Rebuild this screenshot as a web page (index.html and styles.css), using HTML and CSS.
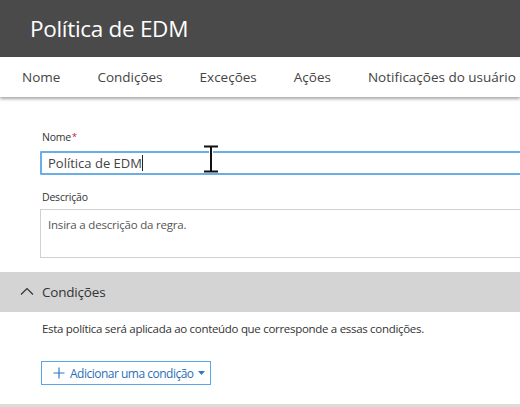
FILE: index.html
```html
<!DOCTYPE html>
<html lang="pt">
<head>
<meta charset="utf-8">
<link rel="stylesheet" href="styles.css">
</head>
<body>
<div class="page">
  <header class="header"><h1 class="title">Política de EDM</h1></header>
  <nav class="nav">
    <span class="nav-item">Nome</span>
    <span class="nav-item">Condições</span>
    <span class="nav-item">Exceções</span>
    <span class="nav-item">Ações</span>
    <span class="nav-item">Notificações do usuário</span>
  </nav>
  <section class="form">
    <label class="label">Nome<span class="req">*</span></label>
    <div class="input"><span class="value">Política de EDM</span><span class="caret"></span></div>
    <label class="label label-desc">Descrição</label>
    <div class="textarea">Insira a descrição da regra.</div>
  </section>
  <div class="band">
    <svg class="chev" width="14" height="8" viewBox="0 0 14 8"><path d="M1 7.5 L7 1.5 L13 7.5" fill="none" stroke="#333" stroke-width="1.2"/></svg>
    <span class="band-title">Condições</span>
  </div>
  <section class="cond">
    <p class="cond-text">Esta política será aplicada ao conteúdo que corresponde a essas condições.</p>
    <button class="add-btn">
      <svg class="plus" width="12" height="12" viewBox="0 0 12 12"><path d="M6 0.5 V11.5 M0.5 6 H11.5" stroke="#2a7ac8" stroke-width="1.2"/></svg>
      <span>Adicionar uma condição</span>
      <svg class="tri" width="7" height="4" viewBox="0 0 7 4"><path d="M0 0 H7 L3.5 4 Z" fill="#2a7ac8"/></svg>
    </button>
  </section>
  <div class="bottom-line"></div>
  <svg class="ibeam" width="16" height="28" viewBox="0 0 16 28"><path d="M1 1.5 H15 M1 26.5 H15 M8 1.5 V26.5" fill="none" stroke="#fff" stroke-width="4"/><path d="M1 1.5 H15 M1 26.5 H15 M8 1.5 V26.5" fill="none" stroke="#111" stroke-width="2"/></svg>
</div>
</body>
</html>
```

FILE: styles.css
```css
html, body {
  margin: 0;
  padding: 0;
  background: #fff;
}
body {
  font-family: "Open Sans", "Noto Sans", sans-serif;
  color: #333;
}
.page {
  position: relative;
  width: 520px;
  height: 407px;
  overflow: hidden;
}
.header {
  height: 57px;
  background: #4a4a4a;
  display: flex;
  align-items: center;
  padding-left: 30px;
}
.title {
  margin: 0;
  font-size: 22.5px;
  font-weight: 400;
  color: #fff;
  letter-spacing: -0.3px;
}
.nav {
  height: 40px;
  display: flex;
  align-items: center;
  gap: 37px;
  padding-left: 22px;
  box-shadow: 0 2px 3px rgba(0,0,0,0.35);
  position: relative;
  white-space: nowrap;
}
.nav-item {
  font-size: 13.5px;
  color: #444;
}
.form {
  padding: 33px 0 0 40px;
  display: flex;
  flex-direction: column;
}
.label {
  font-size: 10.5px;
  letter-spacing: -0.2px;
  color: #333;
  line-height: 14px;
  padding-left: 2px;
}
.req {
  color: #c8102e;
  font-size: 9px;
  vertical-align: top;
  margin-left: 1px;
}
.input {
  margin-top: 7px;
  height: 20px;
  width: 520px;
  border: 2px solid #6aaee8;
  border-radius: 1px;
  display: flex;
  align-items: center;
  padding-left: 6px;
  font-size: 13px;
  color: #444;
}
.caret {
  width: 1px;
  height: 16px;
  background: #222;
}
.label-desc {
  margin-top: 15px;
}
.textarea {
  margin-top: 5px;
  height: 49px;
  width: 520px;
  border: 1px solid #d0d0d0;
  padding: 7px 0 0 7px;
  box-sizing: border-box;
  font-size: 11.5px;
  letter-spacing: -0.2px;
  color: #555;
}
.band {
  margin-top: 14px;
  height: 40px;
  background: #d4d4d4;
  display: flex;
  align-items: center;
  padding-left: 20px;
  gap: 8px;
}
.chev {
  margin-top: -3px;
}
.band-title {
  font-size: 13.5px;
  letter-spacing: -0.2px;
  color: #333;
}
.cond {
  padding: 8px 0 0 42px;
}
.cond-text {
  margin: 0;
  font-size: 11.5px;
  letter-spacing: -0.3px;
  color: #333;
  line-height: 18px;
}
.add-btn {
  margin-top: 23px;
  margin-left: -1px;
  height: 24px;
  width: 170px;
  border: 1px solid #5aa6ea;
  background: #fff;
  display: flex;
  align-items: center;
  padding: 0 0 0 11px;
  font-family: inherit;
  font-size: 12px;
  letter-spacing: -0.5px;
  color: #2a6fb8;
  white-space: nowrap;
}
.plus {
  margin-right: 5px;
}
.tri {
  margin-left: 4px;
}
.bottom-line {
  position: absolute;
  left: 0;
  right: 0;
  top: 404px;
  height: 3px;
  background: #dcdcdc;
}
.ibeam {
  position: absolute;
  left: 203px;
  top: 145px;
}
```
